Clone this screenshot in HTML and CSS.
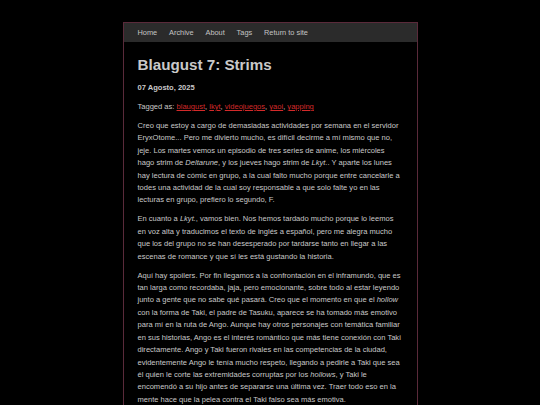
FILE: index.html
```html
<!DOCTYPE html>
<html lang="es">
<head>
<meta charset="utf-8">
<title>Blaugust 7: Strims</title>
<link rel="stylesheet" href="styles.css">
</head>
<body>
<div class="page">
  <nav class="nav">
    <a href="#">Home</a>
    <a href="#">Archive</a>
    <a href="#">About</a>
    <a href="#">Tags</a>
    <a href="#">Return to site</a>
  </nav>
  <main class="content">
    <h1 class="title">Blaugust 7: Strims</h1>
    <p class="date">07 Agosto, 2025</p>
    <p class="tags">Tagged as: <a href="#">blaugust</a>, <a href="#">lkyt</a>, <a href="#">videojuegos</a>, <a href="#">yaoi</a>, <a href="#">yapping</a></p>
    <p>Creo que estoy a cargo de demasiadas actividades por semana en el servidor EryxOtome... Pero me divierto mucho, es difícil decirme a mí mismo que no, jeje. Los martes vemos un episodio de tres series de anime, los miércoles hago strim de <em>Deltarune</em>, y los jueves hago strim de <em>Lkyt.</em>. Y aparte los lunes hay lectura de cómic en grupo, a la cual falto mucho porque entre cancelarle a todes una actividad de la cual soy responsable a que solo falte yo en las lecturas en grupo, prefiero lo segundo, F.</p>
    <p>En cuanto a <em>Lkyt.</em>, vamos bien. Nos hemos tardado mucho porque lo leemos en voz alta y traducimos el texto de inglés a español, pero me alegra mucho que los del grupo no se han desesperado por tardarse tanto en llegar a las escenas de romance y que sí les está gustando la historia.</p>
    <p>Aquí hay spoilers. Por fin llegamos a la confrontación en el inframundo, que es tan larga como recordaba, jaja, pero emocionante, sobre todo al estar leyendo junto a gente que no sabe qué pasará. Creo que el momento en que el <em>hollow</em> con la forma de Taki, el padre de Tasuku, aparece se ha tomado más emotivo para mí en la ruta de Ango. Aunque hay otros personajes con temática familiar en sus historias, Ango es el interés romántico que más tiene conexión con Taki directamente. Ango y Taki fueron rivales en las competencias de la ciudad, evidentemente Ango le tenía mucho respeto, llegando a pedirle a Taki que sea él quien le corte las extremidades corruptas por los <em>hollows</em>, y Taki le encomendó a su hijo antes de separarse una última vez. Traer todo eso en la mente hace que la pelea contra el Taki falso sea más emotiva.</p>
  </main>
</div>
</body>
</html>
```
FILE: styles.css
```css
html, body {
  margin: 0;
  padding: 0;
  background: #000;
}
body {
  font-family: "Liberation Sans", Arial, sans-serif;
  font-size: 7.55px;
  color: #c9c9c9;
}
.page {
  width: 293px;
  margin: 22px auto 0;
  border: 1px solid #5a2a3a;
  background: #000;
}
.nav {
  display: flex;
  gap: 11.8px;
  align-items: center;
  height: 19px;
  padding: 0 14px;
  background: #2b2b2b;
}
.nav a {
  color: #c4c4c4;
  text-decoration: none;
  font-size: 7.4px;
}
.content {
  padding: 13px 14px 20px;
}
.title {
  margin: 0;
  font-size: 15.2px;
  line-height: 20px;
  font-weight: bold;
  color: #c9c9c9;
}
.content p {
  margin: 6.6px 0 0;
  line-height: 12.4px;
}
.content .date {
  margin-top: 7px;
  font-weight: bold;
}
.content .tags {
  margin-top: 6.6px;
}
.tags a {
  color: #d42a2a;
  text-decoration: underline;
}
em {
  font-style: italic;
}
```
